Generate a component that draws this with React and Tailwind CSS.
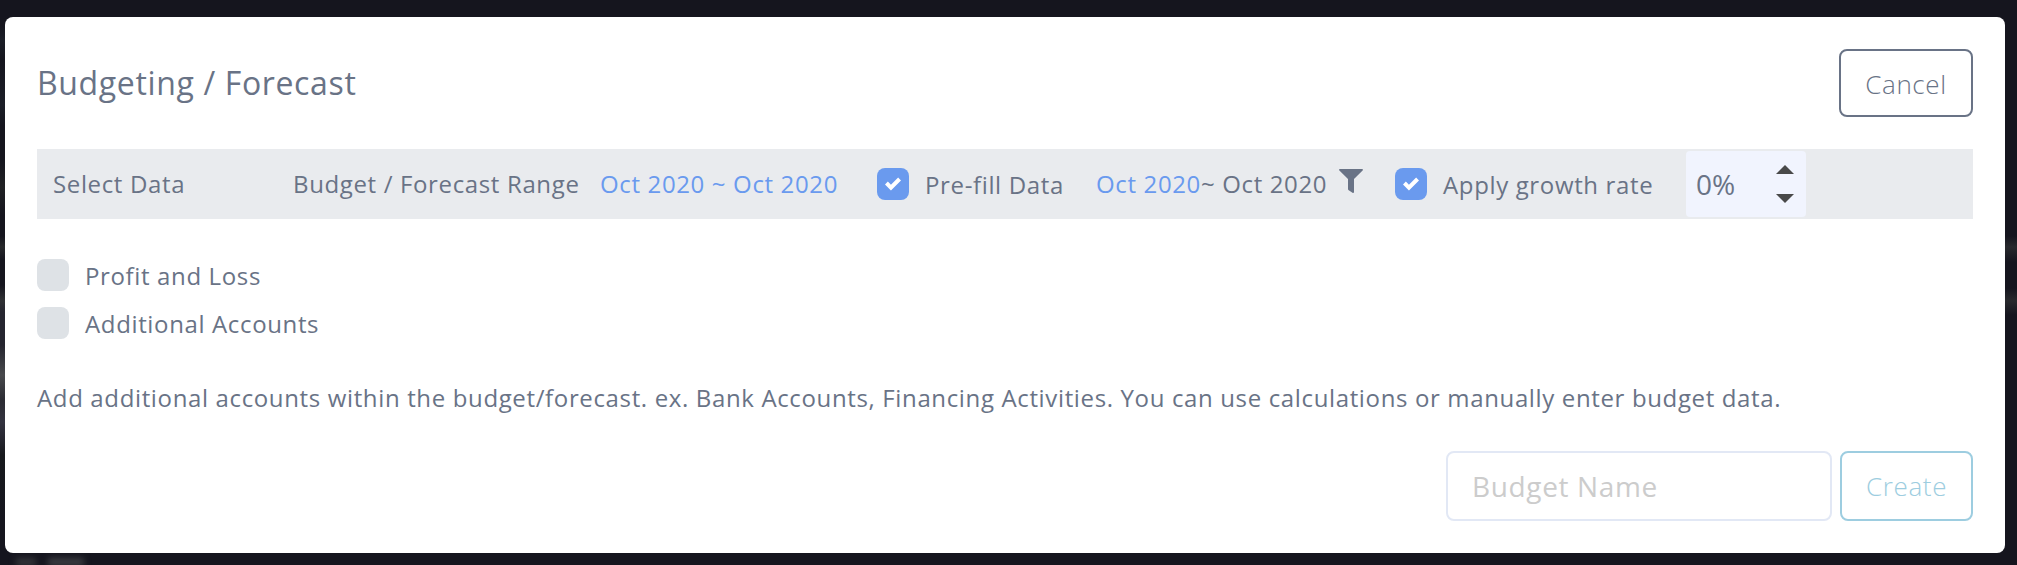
import { useState } from "react"

const Checkbox = ({ checked, onChange, label }) => (
  <label className="flex items-center cursor-pointer">
    <input type="checkbox" className="sr-only" checked={checked} onChange={onChange} />
    <span
      className={`w-8 h-8 shrink-0 rounded-lg flex items-center justify-center ${
        checked ? "bg-[#6a9aee]" : "bg-[#dee2e6]"
      }`}
    >
      {checked && (
        <svg className="w-4 h-4" viewBox="0 0 8 8" fill="#fff">
          <path d="M6.564.75l-3.59 3.612-1.538-1.55L0 4.26 2.974 7.25 8 2.193z" />
        </svg>
      )}
    </span>
    <span className="ml-4 mt-0.5 whitespace-nowrap">{label}</span>
  </label>
)

const App = () => {
  const [prefill, setPrefill] = useState(true)
  const [growth, setGrowth] = useState(true)
  const [profit, setProfit] = useState(false)
  const [accounts, setAccounts] = useState(false)
  const [rate, setRate] = useState(0)
  const [name, setName] = useState("")

  return (
    <div className="relative h-[565px] overflow-hidden bg-[#15151e] flex font-['Open_Sans',sans-serif] text-[#697386]">
      {/* Dimmed page behind the modal */}
      <div className="w-[5px] shrink-0 bg-[linear-gradient(#15151e_25px,#1b1e27_40px,#15151e_60px,#1b1e27_105px,#15151e_125px,#15151e_160px,#202124_187px,#15151e_215px,#15151e_236px,#27282b_247px,#15151e_260px,#15151e_285px,#303134_301px,#25252f_312px,#25252f_345px,#48494c_375px,#2b2b33_400px,#33333f_422px,#25252f_440px,#17191d_455px,#15151e_520px)]"></div>
      <div className="absolute left-4 top-[558px] flex gap-3 blur-[3px]">
        <div className="w-5 h-2 bg-[#34353a]"></div>
        <div className="w-9 h-2 bg-[#3c3d42]"></div>
      </div>

      <div className="relative flex-1 mt-[17px] mb-3 bg-white rounded-lg p-8 flex flex-col text-2xl tracking-[0.64px]">
        {/* Header */}
        <div className="flex items-center justify-between">
          <h1 className="text-[32px] leading-[68px]">Budgeting / Forecast</h1>
          <button className="w-[134px] h-[68px] pt-0.5 border-2 border-[#697386] rounded-lg text-[26px] font-light">
            Cancel
          </button>
        </div>

        {/* Options bar */}
        <div className="mt-8 h-[70px] shrink-0 bg-[#e9ebee] pl-4 flex items-center whitespace-nowrap">
          <span className="w-60">Select Data</span>
          <span className="w-[307px]">Budget / Forecast Range</span>
          <span className="w-[277px] text-[#6a9aee]">Oct 2020 ~ Oct 2020</span>
          <div className="w-[219px]">
            <Checkbox checked={prefill} onChange={() => setPrefill(!prefill)} label="Pre-fill Data" />
          </div>
          <span className="w-[243px]">
            <span className="text-[#6a9aee]">Oct 2020</span>~ Oct 2020
          </span>
          <svg className="w-6 h-6 -mt-1.5" viewBox="0 0 24 24" fill="#697386">
            <path d="M.9 0h22.2c.9 0 1.1.9.5 1.5L15 10v13c0 1-.8 1.2-1.5.8l-3.8-2.6c-.5-.3-.7-.7-.7-1.2V10L.4 1.5C-.2.900 0 0 .9 0z" />
          </svg>
          <div className="ml-8 w-[291px]">
            <Checkbox checked={growth} onChange={() => setGrowth(!growth)} label="Apply growth rate" />
          </div>
          <div className="w-[120px] h-[66px] bg-[#f1f4fe] rounded pl-2.5 pr-3 flex items-center justify-between">
            <span className="mt-0.5 text-[28px] tracking-normal">{rate}%</span>
            <div className="flex flex-col gap-5">
              <button onClick={() => setRate(rate + 1)}>
                <svg className="block w-[18px] h-[9px]" viewBox="0 0 18 9" fill="#494949">
                  <path d="M9 0l9 9H0z" />
                </svg>
              </button>
              <button onClick={() => setRate(rate - 1)}>
                <svg className="block w-[18px] h-[9px]" viewBox="0 0 18 9" fill="#494949">
                  <path d="M0 0h18L9 9z" />
                </svg>
              </button>
            </div>
          </div>
        </div>

        {/* Account groups */}
        <div className="mt-10 flex flex-col gap-4">
          <div className="h-8 flex items-center">
            <Checkbox checked={profit} onChange={() => setProfit(!profit)} label="Profit and Loss" />
          </div>
          <div className="h-8 flex items-center">
            <Checkbox checked={accounts} onChange={() => setAccounts(!accounts)} label="Additional Accounts" />
          </div>
        </div>

        <p className="mt-[41px] leading-9">
          Add additional accounts within the budget/forecast. ex. Bank Accounts, Financing Activities. You can use
          calculations or manually enter budget data.
        </p>

        {/* Footer */}
        <div className="mt-auto flex justify-end gap-2">
          <input
            className="w-[386px] h-[70px] border-2 border-[#e2e8f5] rounded-lg px-6 text-[28px] tracking-[0.64px] placeholder:text-[#cccccc] outline-none"
            placeholder="Budget Name"
            value={name}
            onChange={(e) => setName(e.target.value)}
          />
          <button className="w-[133px] h-[70px] border-2 border-[#9dcde0] rounded-lg text-[26px] font-light text-[#9dcde0]">
            Create
          </button>
        </div>
      </div>

      <div className="w-3 shrink-0 bg-[linear-gradient(#15151e_236px,#28292d_247px,#15151e_262px,#15151e_288px,#28292d_301px,#15151e_315px)]"></div>
    </div>
  )
}

export default App
